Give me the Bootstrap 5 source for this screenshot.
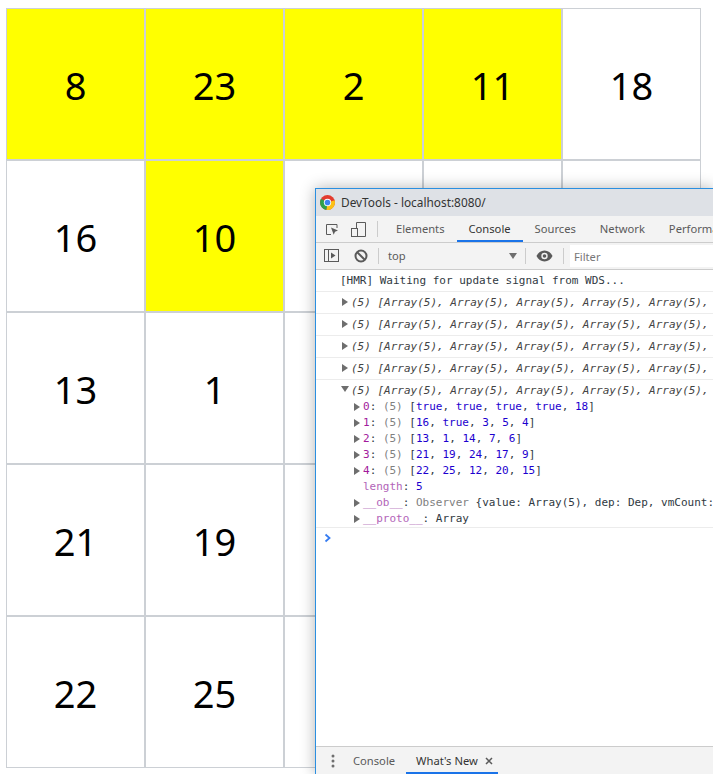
<!DOCTYPE html>
<html lang="en">
<head>
<meta charset="utf-8">
<title>Bingo</title>
<link href="https://cdn.jsdelivr.net/npm/bootstrap@5.3.0/dist/css/bootstrap.min.css" rel="stylesheet">
<style>
html,body{height:774px;overflow:hidden;background:#fff}
.board-page{padding:8px 0 0 6px}
.board{display:grid;grid-template-columns:repeat(5,139px);grid-auto-rows:152px;width:695px}
.tile{border:1px solid #ccd0d5;padding-top:2px;font:38px/1 "Noto Sans",sans-serif;color:#000}
.tile-on{background:#ff0}
.dt{position:absolute;left:315px;top:188px;width:398px;height:586px;background:#fff;border:1px solid #2b8fe0;border-right:0;border-bottom:0;box-shadow:0 0 14px rgba(0,0,0,.3);overflow:hidden;font-family:"Noto Sans",sans-serif;color:#333}
.dt-title{height:27px;background:#dee1e6;font-size:11.85px;padding-left:4px;gap:6px;color:#333}
.dt-tabs{height:27px;background:#f3f3f3;border-bottom:1px solid #ccc;font-size:11.2px;color:#5a5a5a}
.dt-tools{height:27px;background:#f3f3f3;border-bottom:1px solid #ccc;font-size:11.2px;color:#5a5a5a}
.sep{width:1px;height:16px;background:#ccc;flex:none}
.tabi{padding:0 12px;height:26px;line-height:26px;white-space:nowrap}
.tabi-on{color:#333;box-shadow:inset 0 -2px #1a73e8}
.filter{background:#fff;height:22px;line-height:24px;flex:1;padding-left:4px;color:#777;margin-left:6px}
.con{font:11px/16px "DejaVu Sans Mono","Liberation Mono",monospace;color:#303942;white-space:nowrap;flex:1;min-height:0}
.ln{height:22px;line-height:21px;border-bottom:1px solid #ececec;padding-left:24px;position:relative;overflow:hidden}
.ln.sum{font-style:italic;padding-left:35px;color:#444}
.arr{position:absolute;width:0;height:0;border-style:solid;border-color:transparent transparent transparent #6e6e6e;border-width:4px 0 4px 6px}
.ln .arr{left:26px;top:6px}
.tree{padding:0 0 1px 47px;height:148px;border-bottom:1px solid #ececec;position:relative}
.tree .head{font-style:italic;margin-left:-12px;color:#444;height:19px;line-height:21px}
.node{position:relative;height:16px}
.node .arr{left:-9px;top:4px}
.tree .down{left:25px;top:6px;border-width:6px 4px 0 4px;border-color:#6e6e6e transparent transparent transparent}
.k{color:#a21a9c}
.k2{color:#b264b8}
.g{color:#808080}
.v{color:#1c00cf}
.prompt{padding:2px 0 0 8px;height:24px}
.dt-foot{height:28px;background:#f3f3f3;border-top:1px solid #ccc;font-size:11.2px;color:#5a5a5a;padding-left:15px}
.foot-tab{height:27px;line-height:27px;padding:0 9px;white-space:nowrap}
.foot-on{color:#333;box-shadow:inset 0 -2px #1a73e8;width:92px;padding-left:10px;padding-right:5px}
.dd-caret{border:solid transparent;border-width:6px 4px 0;border-top-color:#6e6e6e}
.top-label{width:121px;margin-left:9px}
.caret-sep{margin-left:8px}
.eye-ico{margin-left:10px}
.eye-sep{margin-left:10px}
.stop-ico{margin-left:14px}
.sep-tools{margin-left:10px}
.dev-ico{margin-left:11px}
.sep-tabs{margin-left:10px;margin-right:6px}
.foot-first{margin-left:9px;margin-right:2px}
</style>
</head>
<body>
<div class="board-page">
<div class="board text-center">
<div class="tile tile-on d-flex align-items-center justify-content-center">8</div>
<div class="tile tile-on d-flex align-items-center justify-content-center">23</div>
<div class="tile tile-on d-flex align-items-center justify-content-center">2</div>
<div class="tile tile-on d-flex align-items-center justify-content-center">11</div>
<div class="tile d-flex align-items-center justify-content-center">18</div>
<div class="tile d-flex align-items-center justify-content-center">16</div>
<div class="tile tile-on d-flex align-items-center justify-content-center">10</div>
<div class="tile d-flex align-items-center justify-content-center">3</div>
<div class="tile d-flex align-items-center justify-content-center">5</div>
<div class="tile d-flex align-items-center justify-content-center">4</div>
<div class="tile d-flex align-items-center justify-content-center">13</div>
<div class="tile d-flex align-items-center justify-content-center">1</div>
<div class="tile d-flex align-items-center justify-content-center">14</div>
<div class="tile d-flex align-items-center justify-content-center">7</div>
<div class="tile d-flex align-items-center justify-content-center">6</div>
<div class="tile d-flex align-items-center justify-content-center">21</div>
<div class="tile d-flex align-items-center justify-content-center">19</div>
<div class="tile d-flex align-items-center justify-content-center">24</div>
<div class="tile d-flex align-items-center justify-content-center">17</div>
<div class="tile d-flex align-items-center justify-content-center">9</div>
<div class="tile d-flex align-items-center justify-content-center">22</div>
<div class="tile d-flex align-items-center justify-content-center">25</div>
<div class="tile d-flex align-items-center justify-content-center">12</div>
<div class="tile d-flex align-items-center justify-content-center">20</div>
<div class="tile d-flex align-items-center justify-content-center">15</div>
</div>
</div>

<div class="dt d-flex flex-column">
  <div class="dt-title d-flex align-items-center">
    <svg width="15" height="15" viewBox="0 0 16 16"><circle cx="8" cy="8" r="8" fill="#e33b2e"/><path d="M8 8 L1.100 4 A8 8 0 0 0 7 15.900 Z" fill="#2fa04c"/><path d="M8 8 L15.600 5.500 A8 8 0 0 1 7 15.900 Z" fill="#fbc116"/><circle cx="8" cy="8" r="3.900" fill="#fff"/><circle cx="8" cy="8" r="3" fill="#3f83f0"/></svg>
    <span>DevTools - localhost:8080/</span>
  </div>
  <div class="dt-tabs d-flex align-items-center">
    <svg class="ms-2 flex-shrink-0" width="16" height="16" viewBox="0 0 16 16" fill="none" stroke="#5a5a5a"><path d="M7 13.500H2.500V3.500H13V7"/><path d="M7 6.500l7 3-3 1.200-1.300 3z" fill="#5a5a5a" stroke="none"/></svg>
    <svg class="dev-ico flex-shrink-0" width="16" height="17" viewBox="0 0 16 17" fill="none" stroke="#5a5a5a"><path d="M5.500 7V1.500h9v14h-8"/><rect x=".5" y="7.500" width="6" height="8"/></svg>
    <span class="sep sep-tabs"></span>
    <span class="tabi">Elements</span>
    <span class="tabi tabi-on">Console</span>
    <span class="tabi">Sources</span>
    <span class="tabi">Network</span>
    <span class="tabi">Performance</span>
  </div>
  <div class="dt-tools d-flex align-items-center">
    <svg class="ms-2 flex-shrink-0" width="16" height="14" viewBox="0 0 16 14" fill="none" stroke="#5a5a5a"><rect x=".5" y=".5" width="14" height="12"/><path d="M4.500 1v11"/><path d="M7 3.500l4.500 3-4.500 3z" fill="#5a5a5a" stroke="none"/></svg>
    <svg class="stop-ico flex-shrink-0" width="14" height="14" viewBox="0 0 14 14" fill="none" stroke="#5a5a5a" stroke-width="2"><circle cx="7" cy="7" r="5.500"/><path d="M3 3l8 8"/></svg>
    <span class="sep sep-tools"></span>
    <span class="top-label">top</span>
    <span class="dd-caret"></span>
    <span class="sep caret-sep"></span>
    <svg class="eye-ico flex-shrink-0" width="17" height="12" viewBox="0 0 17 12"><path d="M8.500 .5C5 .5 2 2.700 .5 6c1.500 3.300 4.500 5.500 8 5.500s6.500-2.200 8-5.500c-1.500-3.300-4.500-5.500-8-5.500z" fill="#5a5a5a"/><circle cx="8.500" cy="6" r="3.200" fill="#f3f3f3"/><circle cx="8.500" cy="6" r="1.800" fill="#5a5a5a"/></svg>
    <span class="sep eye-sep"></span>
    <span class="filter">Filter</span>
  </div>
  <div class="con">
    <div class="ln">[HMR] Waiting for update signal from WDS...</div>
    <div class="ln sum"><span class="arr"></span>(5) [Array(5), Array(5), Array(5), Array(5), Array(5), Array(5)]</div>
    <div class="ln sum"><span class="arr"></span>(5) [Array(5), Array(5), Array(5), Array(5), Array(5), Array(5)]</div>
    <div class="ln sum"><span class="arr"></span>(5) [Array(5), Array(5), Array(5), Array(5), Array(5), Array(5)]</div>
    <div class="ln sum"><span class="arr"></span>(5) [Array(5), Array(5), Array(5), Array(5), Array(5), Array(5)]</div>
    <div class="tree">
      <span class="arr down"></span>
      <div class="head">(5) [Array(5), Array(5), Array(5), Array(5), Array(5), Array(5)]</div>
      <div class="node"><span class="arr"></span><span class="k">0</span>: <span class="g">(5)</span> [<span class="v">true</span>, <span class="v">true</span>, <span class="v">true</span>, <span class="v">true</span>, <span class="v">18</span>]</div>
      <div class="node"><span class="arr"></span><span class="k">1</span>: <span class="g">(5)</span> [<span class="v">16</span>, <span class="v">true</span>, <span class="v">3</span>, <span class="v">5</span>, <span class="v">4</span>]</div>
      <div class="node"><span class="arr"></span><span class="k">2</span>: <span class="g">(5)</span> [<span class="v">13</span>, <span class="v">1</span>, <span class="v">14</span>, <span class="v">7</span>, <span class="v">6</span>]</div>
      <div class="node"><span class="arr"></span><span class="k">3</span>: <span class="g">(5)</span> [<span class="v">21</span>, <span class="v">19</span>, <span class="v">24</span>, <span class="v">17</span>, <span class="v">9</span>]</div>
      <div class="node"><span class="arr"></span><span class="k">4</span>: <span class="g">(5)</span> [<span class="v">22</span>, <span class="v">25</span>, <span class="v">12</span>, <span class="v">20</span>, <span class="v">15</span>]</div>
      <div class="node"><span class="k2">length</span>: <span class="v">5</span></div>
      <div class="node"><span class="arr"></span><span class="k2">__ob__</span>: <span class="g">Observer</span> {value: Array(5), dep: Dep, vmCount: 0}</div>
      <div class="node"><span class="arr"></span><span class="k2">__proto__</span>: Array</div>
    </div>
    <div class="prompt"><svg width="8" height="10" viewBox="0 0 8 10" fill="none" stroke="#367cf1" stroke-width="1.800"><path d="M1.500 1.500L5.500 5l-4 3.500"/></svg></div>
  </div>
  <div class="dt-foot d-flex align-items-center">
    <svg class="flex-shrink-0" width="4" height="14" viewBox="0 0 4 14" fill="#6e6e6e"><circle cx="2" cy="2" r="1.500"/><circle cx="2" cy="7" r="1.500"/><circle cx="2" cy="12" r="1.500"/></svg>
    <span class="foot-tab foot-first">Console</span>
    <span class="foot-tab foot-on d-flex align-items-center">What's New <svg class="ms-auto" width="8" height="8" viewBox="0 0 8 8" stroke="#5a5a5a" stroke-width="1.500"><path d="M1 1l6 6M7 1L1 7"/></svg></span>
  </div>
</div>
<script src="https://cdn.jsdelivr.net/npm/bootstrap@5.3.0/dist/js/bootstrap.bundle.min.js"></script>
</body>
</html>
